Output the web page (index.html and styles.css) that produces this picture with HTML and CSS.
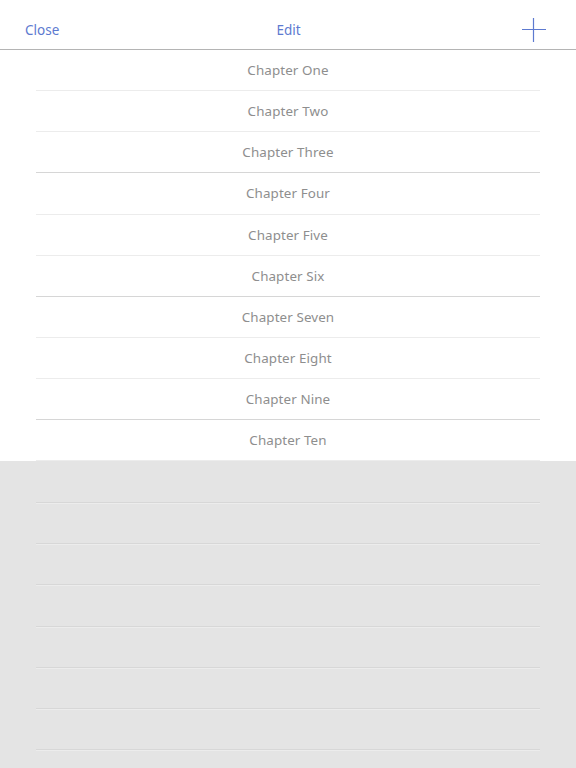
FILE: index.html
```html
<!DOCTYPE html>
<html>
<head>
<meta charset="utf-8">
<link rel="stylesheet" href="styles.css">
</head>
<body>
<div class="app">
  <header class="navbar">
    <span class="nav-btn nav-left">Close</span>
    <span class="nav-btn nav-title">Edit</span>
    <span class="nav-btn nav-right">
      <svg width="24" height="24" viewBox="0 0 24 24"><path d="M0 11.5H24M11.5 0V24" stroke="#5d7ad0" stroke-width="1.2" fill="none"/></svg>
    </span>
  </header>
  <ul class="list">
    <li class="row"><span>Chapter One</span></li>
    <li class="row"><span>Chapter Two</span></li>
    <li class="row dark"><span>Chapter Three</span></li>
    <li class="row"><span>Chapter Four</span></li>
    <li class="row"><span>Chapter Five</span></li>
    <li class="row dark"><span>Chapter Six</span></li>
    <li class="row"><span>Chapter Seven</span></li>
    <li class="row"><span>Chapter Eight</span></li>
    <li class="row dark"><span>Chapter Nine</span></li>
    <li class="row"><span>Chapter Ten</span></li>
  </ul>
  <div class="empty">
    <div class="erow"></div>
    <div class="erow"></div>
    <div class="erow"></div>
    <div class="erow"></div>
    <div class="erow"></div>
    <div class="erow"></div>
    <div class="erow"></div>
    <div class="erow"></div>
  </div>
</div>
</body>
</html>
```
FILE: styles.css
```css
html, body {
  margin: 0;
  padding: 0;
  height: 100%;
  overflow: hidden;
}
body {
  font-family: "Noto Sans", "Open Sans", sans-serif;
  background: #e4e4e4;
}
.app {
  display: flex;
  flex-direction: column;
  height: 768px;
}
.navbar {
  flex: 0 0 50px;
  height: 50px;
  background: #ffffff;
  border-bottom: 1px solid #b4b4b4;
  display: grid;
  grid-template-columns: 1fr auto 1fr;
  align-items: center;
  padding: 10px 25px 0 25px;
  box-sizing: border-box;
}
.nav-btn {
  color: #5d7ad0;
  font-size: 13.5px;
}
.nav-title {
  text-align: center;
  padding-left: 1px;
}
.nav-right {
  display: flex;
  justify-content: flex-end;
  padding-right: 5px;
}
.nav-right svg {
  display: block;
}
.list {
  flex: 0 0 auto;
  list-style: none;
  margin: 0;
  padding: 0 36px;
  background: #ffffff;
}
.row {
  height: 41.15px;
  box-sizing: border-box;
  border-bottom: 1px solid #ececec;
  display: flex;
  align-items: center;
  justify-content: center;
  color: #8e8e8e;
  font-size: 13.4px;
  letter-spacing: 0.1px;
}
.row.dark {
  border-bottom-color: #d6d6d6;
}
.empty {
  flex: 1 1 auto;
  min-height: 0;
  overflow: hidden;
  background: #e4e4e4;
  padding: 0 36px;
}
.erow {
  height: 41.3px;
  box-sizing: border-box;
  border-bottom: 1px solid #d7d7d7;
  box-shadow: 0 1px 0 #ececec;
}
```
